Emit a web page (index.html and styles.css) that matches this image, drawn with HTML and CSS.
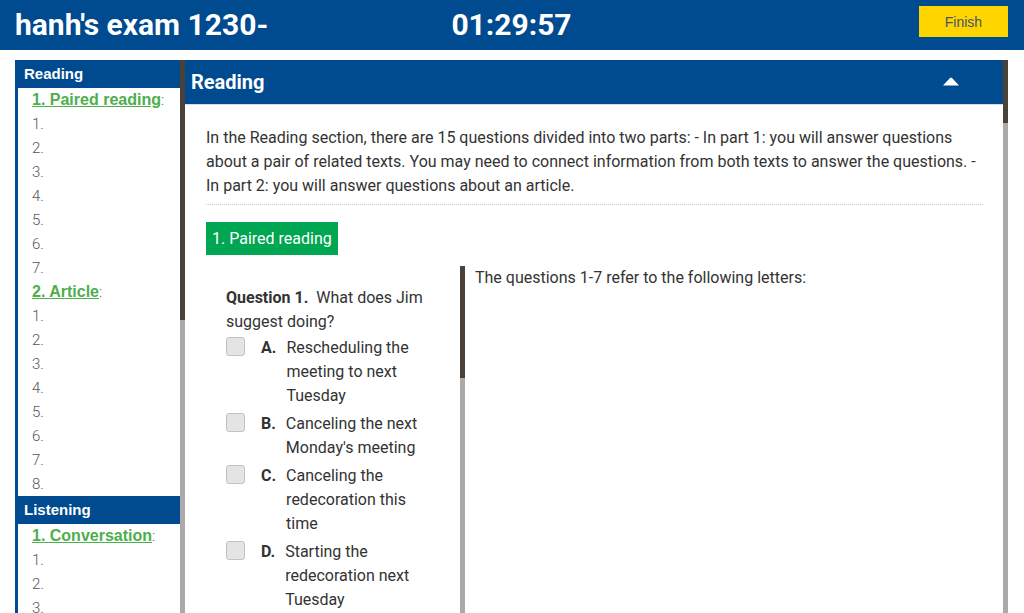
FILE: index.html
```html
<!DOCTYPE html>
<html lang="en">
<head>
<meta charset="utf-8">
<title>hanh's exam 1230-</title>
<link rel="stylesheet" href="styles.css">
</head>
<body>
<header class="topbar">
  <div class="title">hanh's exam 1230-</div>
  <div class="timer">01:29:57</div>
  <div class="actions"><button class="finish" type="button">Finish</button></div>
</header>
<div class="workspace">
  <nav class="sidebar">
    <div class="sec-head">Reading</div>
    <ul class="sec-list">
      <li class="part"><a href="#">1. Paired reading</a>:</li>
      <li>1.</li><li>2.</li><li>3.</li><li>4.</li><li>5.</li><li>6.</li><li>7.</li>
      <li class="part"><a href="#">2. Article</a>:</li>
      <li>1.</li><li>2.</li><li>3.</li><li>4.</li><li>5.</li><li>6.</li><li>7.</li><li>8.</li>
    </ul>
    <div class="sec-head">Listening</div>
    <ul class="sec-list">
      <li class="part"><a href="#">1. Conversation</a>:</li>
      <li>1.</li><li>2.</li><li>3.</li><li>4.</li>
    </ul>
  </nav>
  <div class="scrollbar scrollbar--side"><div class="thumb"></div></div>
  <main class="panel">
    <div class="panel-head">
      <h1>Reading</h1>
      <svg class="caret" width="18" height="10" viewBox="0 0 18 10"><path d="M1 9.5 L8 2 Q9 1 10 2 L17 9.5 Z" fill="#fff"/></svg>
    </div>
    <div class="panel-body">
      <p class="intro">In the Reading section, there are 15 questions divided into two parts: - In part 1: you will answer questions about a pair of related texts. You may need to connect information from both texts to answer the questions. - In part 2: you will answer questions about an article.</p>
      <div class="badge">1. Paired reading</div>
      <div class="cols">
        <div class="qcol">
          <p class="question"><b>Question 1.</b> What does Jim suggest doing?</p>
          <ul class="options">
            <li class="option"><span class="box"></span><b class="letter">A.</b><span class="otext">Rescheduling the meeting to next Tuesday</span></li>
            <li class="option"><span class="box"></span><b class="letter">B.</b><span class="otext">Canceling the next Monday's meeting</span></li>
            <li class="option"><span class="box"></span><b class="letter">C.</b><span class="otext">Canceling the redecoration this time</span></li>
            <li class="option"><span class="box"></span><b class="letter">D.</b><span class="otext">Starting the redecoration next Tuesday</span></li>
          </ul>
        </div>
        <div class="scrollbar scrollbar--mid"><div class="thumb"></div></div>
        <div class="tcol">
          <p>The questions 1-7 refer to the following letters:</p>
        </div>
      </div>
    </div>
  </main>
  <div class="scrollbar scrollbar--main"><div class="thumb"></div></div>
</div>
</body>
</html>
```

FILE: styles.css
```css
* { box-sizing: border-box; }
html, body { margin: 0; padding: 0; background: #fff; }
body {
  font-family: Roboto, "Liberation Sans", Arial, sans-serif;
  color: #333;
  width: 1024px;
  height: 613px;
  overflow: hidden;
}

.topbar {
  height: 50px;
  background: #004a8f;
  color: #fff;
  display: grid;
  grid-template-columns: 1fr auto 1fr;
  align-items: center;
  padding: 0 16px 0 15px;
}
.title { font-size: 30px; font-weight: 700; line-height: 1; }
.timer { font-size: 30px; font-weight: 700; line-height: 1; }
.actions { display: flex; justify-content: flex-end; align-self: start; padding-top: 6px; }
.finish {
  width: 89px;
  height: 31px;
  border: 0;
  background: #ffd500;
  color: #44536e;
  font-family: "Liberation Sans", Arial, sans-serif;
  font-size: 14px;
  padding: 0;
}

.workspace {
  display: flex;
  margin-top: 10px;
  padding: 0 16px 0 15px;
  height: 553px;
  overflow: hidden;
}

.sidebar {
  width: 165px;
  flex: none;
  border-left: 3px solid #004a8f;
}
.sec-head {
  height: 28px;
  line-height: 28px;
  background: #004a8f;
  color: #fff;
  font-family: "Liberation Sans", Arial, sans-serif;
  font-weight: 700;
  font-size: 15px;
  padding-left: 6px;
}
.sec-list { list-style: none; margin: 0; padding: 0 0 0 14px; }
.sec-list li {
  font-size: 15px;
  line-height: 24px;
  font-weight: 300;
  color: #555;
}
.sec-list .part a {
  font-family: "Liberation Sans", Arial, sans-serif;
  font-size: 16px;
  color: #4cae4c;
  font-weight: 700;
  text-decoration: underline;
}

.scrollbar { width: 5px; flex: none; background: #aaa; }
.scrollbar .thumb { background: #4a4238; }
.scrollbar--side .thumb { height: 260px; }
.scrollbar--main .thumb { height: 63px; }
.scrollbar--mid .thumb { height: 112px; }

.panel { flex: 1; min-width: 0; }
.panel-head {
  height: 45px;
  background: #004a8f;
  color: #fff;
  display: flex;
  align-items: center;
  justify-content: space-between;
  padding: 0 43px 0 6px;
  border-bottom: 1px solid #d6dde6;
}
.panel-head h1 { margin: 0; font-size: 20px; font-weight: 700; }
.caret { display: block; margin-top: -3px; }

.panel-body { padding: 21px 20px 0 21px; }
.intro {
  margin: 0;
  font-size: 16px;
  line-height: 24px;
  padding-bottom: 6px;
  border-bottom: 1px dotted #c8c8c8;
}
.badge {
  display: inline-block;
  margin-top: 17px;
  height: 33px;
  line-height: 33px;
  padding: 0 6px;
  background: #00a651;
  color: #fff;
  font-size: 16px;
}

.cols { display: flex; margin-top: 11px; height: 400px; }
.qcol { width: 254px; flex: none; padding: 20px 20px 0 20px; }
.tcol { flex: 1; padding: 0 10px; }
.tcol p { margin: 0; font-size: 16px; line-height: 24px; }

.question { margin: 0; font-size: 16px; line-height: 24px; }
.question b { margin-right: 4px; }
.options { list-style: none; margin: 2px 0 0; padding: 0; }
.option {
  display: flex;
  align-items: flex-start;
  font-size: 16px;
  line-height: 24px;
  margin-bottom: 4px;
}
.box {
  width: 19px;
  height: 19px;
  flex: none;
  margin-top: 1px;
  margin-right: 16px;
  background: #e4e4e4;
  border: 1px solid #c2c2c2;
  border-radius: 3px;
}
.letter { flex: none; margin-right: 10px; }
.otext { flex: 1; }
```
